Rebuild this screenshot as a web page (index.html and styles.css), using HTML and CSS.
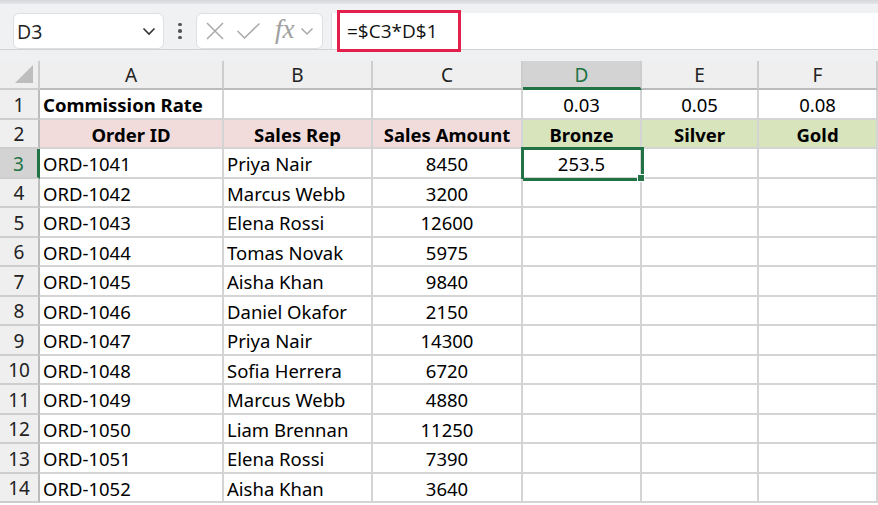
FILE: index.html
```html
<!DOCTYPE html>
<html>
<head>
<meta charset="utf-8">
<link rel="stylesheet" href="styles.css">
</head>
<body>
<div class="app">
  <div class="topstrip"></div>
  <div class="toolbar">
    <div class="namebox">
      <span class="nb-text">D3</span>
      <svg class="chev" width="14" height="9" viewBox="0 0 14 9"><path d="M1.5 1.5 L7 7 L12.5 1.5" fill="none" stroke="#333" stroke-width="1.6"/></svg>
    </div>
    <div class="kebab"><i></i><i></i><i></i></div>
    <div class="fxbox">
      <svg class="ic-x" width="20" height="20" viewBox="0 0 20 20"><path d="M2 2 L18 18 M18 2 L2 18" stroke="#a9a9a9" stroke-width="1.5" fill="none"/></svg>
      <svg class="ic-ok" width="25" height="18" viewBox="0 0 25 18"><path d="M1.5 9 L8.5 16 L23.5 1.5" stroke="#a9a9a9" stroke-width="1.5" fill="none"/></svg>
      <span class="fx">fx</span>
      <svg class="chev2" width="14" height="9" viewBox="0 0 14 9"><path d="M1.5 1.5 L7 7 L12.5 1.5" fill="none" stroke="#a9a9a9" stroke-width="1.5"/></svg>
    </div>
    <div class="formula">
      <span class="ftext">=$C3*D$1</span>
      <div class="highlight"></div>
    </div>
  </div>
  <div class="gap"></div>
  <div class="sheet">
    <div class="corner"><span class="tri"></span></div>
    <div class="ch">A</div><div class="ch">B</div><div class="ch">C</div><div class="ch sel">D</div><div class="ch">E</div><div class="ch">F</div>

    <div class="rh">1</div>
    <div class="c b l">Commission Rate</div><div class="c"></div><div class="c"></div><div class="c m">0.03</div><div class="c m">0.05</div><div class="c m">0.08</div>

    <div class="rh">2</div>
    <div class="c b m pink">Order ID</div><div class="c b m pink">Sales Rep</div><div class="c b m pink">Sales Amount</div><div class="c b m green">Bronze</div><div class="c b m green">Silver</div><div class="c b m green">Gold</div>

    <div class="rh sel">3</div>
    <div class="c l">ORD-1041</div><div class="c l">Priya Nair</div><div class="c m">8450</div><div class="c m active">253.5<span class="handle"></span></div><div class="c"></div><div class="c"></div>

    <div class="rh">4</div>
    <div class="c l">ORD-1042</div><div class="c l">Marcus Webb</div><div class="c m">3200</div><div class="c"></div><div class="c"></div><div class="c"></div>

    <div class="rh">5</div>
    <div class="c l">ORD-1043</div><div class="c l">Elena Rossi</div><div class="c m">12600</div><div class="c"></div><div class="c"></div><div class="c"></div>

    <div class="rh">6</div>
    <div class="c l">ORD-1044</div><div class="c l">Tomas Novak</div><div class="c m">5975</div><div class="c"></div><div class="c"></div><div class="c"></div>

    <div class="rh">7</div>
    <div class="c l">ORD-1045</div><div class="c l">Aisha Khan</div><div class="c m">9840</div><div class="c"></div><div class="c"></div><div class="c"></div>

    <div class="rh">8</div>
    <div class="c l">ORD-1046</div><div class="c l">Daniel Okafor</div><div class="c m">2150</div><div class="c"></div><div class="c"></div><div class="c"></div>

    <div class="rh">9</div>
    <div class="c l">ORD-1047</div><div class="c l">Priya Nair</div><div class="c m">14300</div><div class="c"></div><div class="c"></div><div class="c"></div>

    <div class="rh">10</div>
    <div class="c l">ORD-1048</div><div class="c l">Sofia Herrera</div><div class="c m">6720</div><div class="c"></div><div class="c"></div><div class="c"></div>

    <div class="rh">11</div>
    <div class="c l">ORD-1049</div><div class="c l">Marcus Webb</div><div class="c m">4880</div><div class="c"></div><div class="c"></div><div class="c"></div>

    <div class="rh">12</div>
    <div class="c l">ORD-1050</div><div class="c l">Liam Brennan</div><div class="c m">11250</div><div class="c"></div><div class="c"></div><div class="c"></div>

    <div class="rh">13</div>
    <div class="c l">ORD-1051</div><div class="c l">Elena Rossi</div><div class="c m">7390</div><div class="c"></div><div class="c"></div><div class="c"></div>

    <div class="rh">14</div>
    <div class="c l">ORD-1052</div><div class="c l">Aisha Khan</div><div class="c m">3640</div><div class="c"></div><div class="c"></div><div class="c"></div>
  </div>
</div>
</body>
</html>
```

FILE: styles.css
```css
* { box-sizing: border-box; }
html, body { margin: 0; padding: 0; }
body {
  width: 878px;
  height: 505px;
  overflow: hidden;
  background: #ffffff;
  font-family: "Noto Sans", "Open Sans", sans-serif;
}
.app { width: 878px; }
.topstrip {
  height: 4px;
  background: linear-gradient(#d6d7da, #e4e5e8);
}
.toolbar {
  position: relative;
  height: 46px;
  background: #f0f1f3;
  display: flex;
  align-items: flex-start;
  padding-top: 9px;
  padding-left: 13px;
  border-bottom: 1px solid #d2d3d6;
}
.namebox {
  width: 151px;
  height: 36px;
  background: #fff;
  border: 1px solid #dedfe2;
  border-radius: 6px;
  display: flex;
  align-items: center;
  justify-content: space-between;
  padding: 0 7px 0 3px;
}
.nb-text {
  font-family: "Open Sans", "Noto Sans", sans-serif;
  font-size: 19.5px;
  color: #222;
}
.kebab {
  width: 32px;
  height: 36px;
  display: flex;
  flex-direction: column;
  align-items: center;
  justify-content: center;
  gap: 3px;
}
.kebab i {
  display: block;
  width: 3.5px;
  height: 3.5px;
  border-radius: 50%;
  background: #555;
}
.fxbox {
  width: 127px;
  height: 36px;
  background: #fff;
  border: 1px solid #dedfe2;
  border-radius: 6px;
  display: flex;
  align-items: center;
  padding-left: 8px;
}
.ic-x { margin-right: 11px; }
.ic-ok { margin-right: 14px; }
.fx {
  font-family: "Liberation Serif", "DejaVu Serif", serif;
  font-style: italic;
  font-size: 27px;
  line-height: 1;
  color: #a0a0a0;
  margin-right: 5px;
  margin-top: -4px;
}
.formula {
  position: relative;
  margin-left: 8px;
  flex: 1;
  height: 36px;
  background: #fff;
  border-left: 1px solid #dedfe2;
  display: flex;
  align-items: center;
  padding-left: 15px;
}
.ftext {
  font-family: "Open Sans", "Noto Sans", sans-serif;
  font-size: 19px;
  color: #111;
}
.highlight {
  position: absolute;
  left: 5px;
  top: -3px;
  width: 124px;
  height: 42px;
  border: 3px solid #e3204b;
}
.gap {
  height: 11px;
  background: #eff0f2;
}
.sheet {
  display: grid;
  grid-template-columns: 40px 184px 149px 150px 119px 117px 119px;
  grid-template-rows: 29px repeat(14, 29.5px);
}
.corner {
  position: relative;
  background: #efefef;
  border-right: 2px solid #cdcdcd;
  border-bottom: 2px solid #cdcdcd;
}
.tri {
  position: absolute;
  right: 5px;
  bottom: 5px;
  width: 0;
  height: 0;
  border-left: 18px solid transparent;
  border-bottom: 18px solid #bdbdbd;
}
.ch {
  background: #efefef;
  border-right: 2px solid #cdcdcd;
  border-bottom: 2px solid #bcbcbc;
  display: flex;
  align-items: center;
  justify-content: center;
  padding-top: 1px;
  font-size: 19px;
  color: #222;
}
.ch.sel {
  background: #d3d3d3;
  color: #217346;
  border-bottom: 3px solid #217346;
}
.rh {
  background: #efefef;
  border-right: 2px solid #bcbcbc;
  border-bottom: 2px solid #cdcdcd;
  display: flex;
  align-items: center;
  justify-content: center;
  padding-top: 2px;
  font-size: 19px;
  color: #222;
}
.rh.sel {
  background: #d3d3d3;
  color: #217346;
  border-right: 3px solid #217346;
}
.c {
  position: relative;
  border-right: 2px solid #d4d4d4;
  border-bottom: 2px solid #d4d4d4;
  display: flex;
  align-items: center;
  padding-top: 2px;
  font-size: 18.5px;
  color: #000;
  white-space: nowrap;
}
.l { padding-left: 3px; }
.m { justify-content: center; }
.b { font-weight: 700; }
.pink { background: #f2dcdb; }
.green { background: #d8e4bc; }
.active {
  outline: 3px solid #217346;
  outline-offset: -1px;
}
.handle {
  position: absolute;
  right: -5px;
  bottom: -5px;
  width: 8px;
  height: 8px;
  background: #217346;
  border: 1px solid #fff;
  z-index: 2;
}
```
